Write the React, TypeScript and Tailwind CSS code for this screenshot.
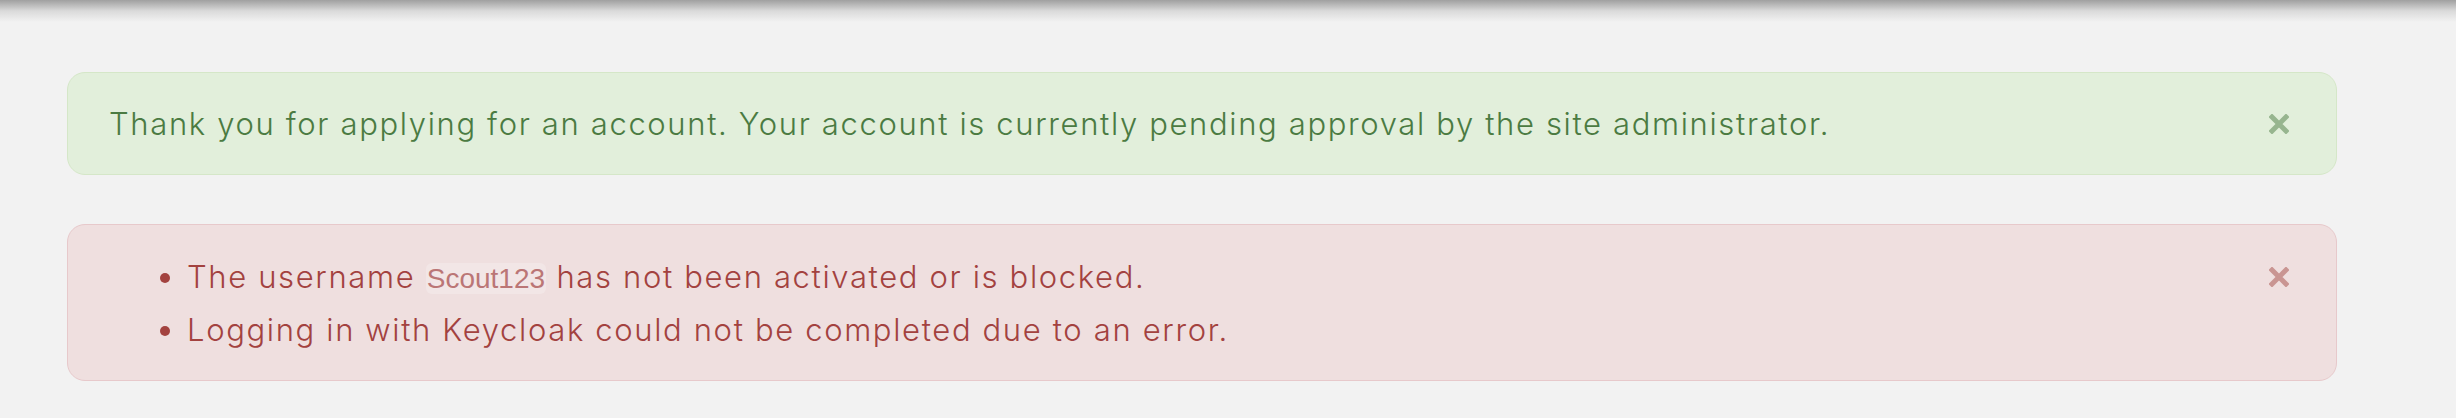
import React from "react";

const CloseIcon = ({ color }: { color: string }) => (
    <svg width="20" height="20" viewBox="0 0 20 20" className="shrink-0">
        <path d="M3 3 L17 17 M17 3 L3 17" stroke={color} strokeWidth="5" strokeLinecap="square" />
    </svg>
);

const App = () => {
    return (
        <div className="min-h-[418px] w-full bg-[#f2f2f2] font-['Inter',sans-serif]">
            <div className="h-[22px] w-full bg-gradient-to-b from-[#a0a0a0] via-[#dadada] to-[#f2f2f2]" />

            <div className="flex flex-col gap-[49px] pl-[67px] pr-[119px] pt-[50px]">
                <div className="flex items-center justify-between rounded-[18px] border border-[#d5e7c8] bg-[#e2efdb] py-[25px] pl-[41px] pr-[47px]">
                    <p className="text-[31px] font-light leading-[51px] tracking-[0.053em] text-[#4b7b42]">
                        Thank you for applying for an account. Your account is currently pending approval by the site administrator.
                    </p>
                    <CloseIcon color="#97b58f" />
                </div>

                <div className="flex items-start justify-between rounded-[18px] border border-[#e7c9cb] bg-[#efdfdf] pb-[25px] pl-[43px] pr-[47px] pt-[26px]">
                    <ul className="list-disc pl-[76px] text-[31px] font-light leading-[51px] tracking-[0.053em] text-[#a3423f] marker:text-[#a3423f]">
                        <li>
                            The username{" "}
                            <span className="rounded-[6px] bg-[#f2e6e6] px-[1px] font-['Liberation_Sans',Arial,sans-serif] text-[28px] font-normal tracking-normal text-[#bb7676]">
                                Scout123
                            </span>{" "}
                            has not been activated or is blocked.
                        </li>
                        <li>Logging in with Keycloak could not be completed due to an error.</li>
                    </ul>
                    <div className="flex h-[51px] items-center">
                        <CloseIcon color="#c99592" />
                    </div>
                </div>
            </div>
        </div>
    );
};

export default App;
